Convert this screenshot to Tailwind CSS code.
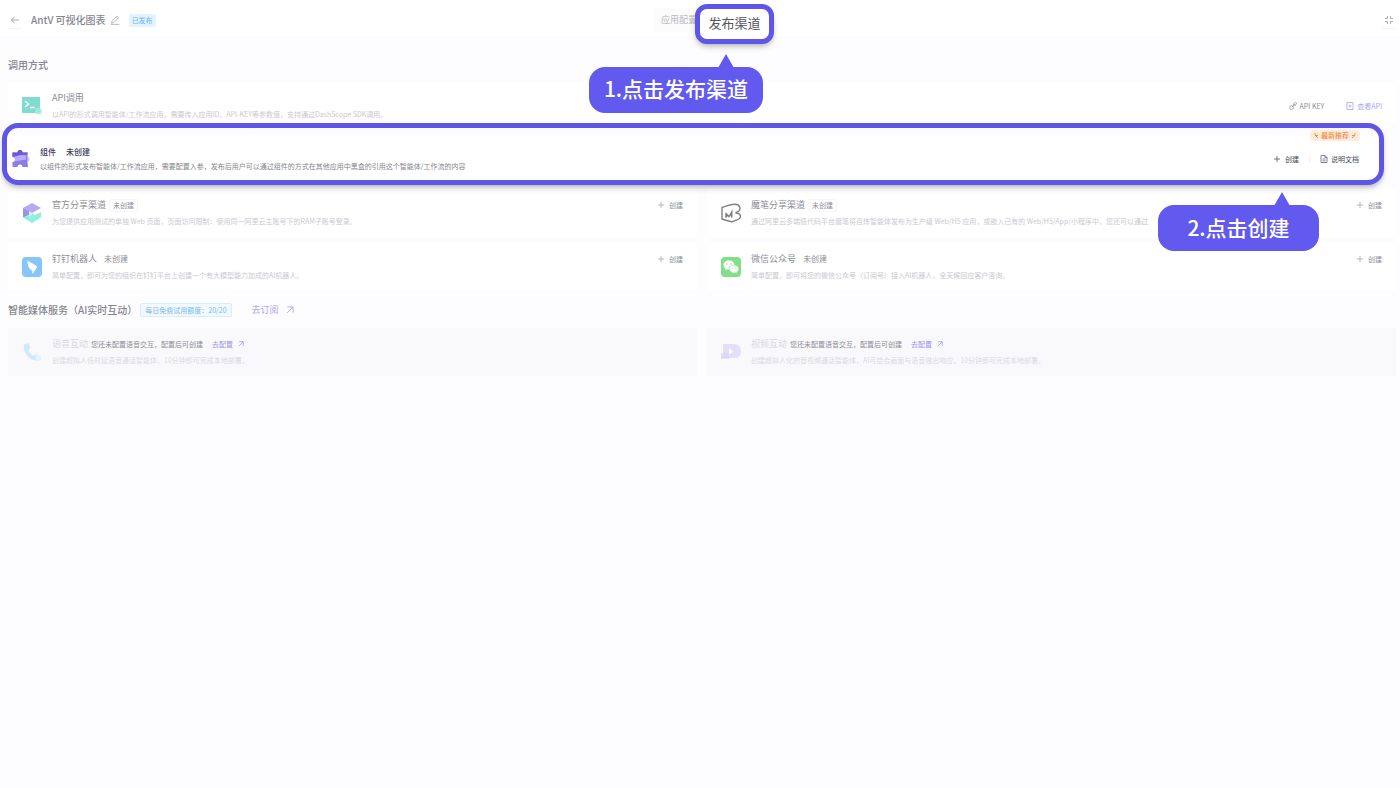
<!DOCTYPE html>
<html lang="zh-CN">
<head>
    <meta charset="UTF-8">
    <meta name="viewport" content="width=device-width, initial-scale=1.0">
    <title>AntV 可视化图表 - 发布渠道</title>
    <script src="https://cdn.jsdelivr.net/npm/@tailwindcss/browser@4"></script>
</head>
<body class="min-h-screen bg-[#fdfdff] font-['Noto_Sans_CJK_SC',sans-serif] text-[7px] text-[#8d8d98]">

    <header class="grid h-9 grid-cols-[1fr_auto_1fr] items-center bg-white pt-1 pr-1 pl-2">
        <div class="flex items-center">
            <button type="button" aria-label="返回" class="flex h-[18px] w-[14px] items-center justify-center border-b border-[#f3f3f6]">
                <svg class="size-[10px]" viewBox="0 0 10 10" fill="none" stroke="#a9a9b0" stroke-width="1"><path d="M9 5H1.5M4.5 2 1.3 5l3.2 3"/></svg>
            </button>
            <h1 class="ml-[9px] text-[10px] leading-4 font-medium text-[#85858f]">AntV 可视化图表</h1>
            <button type="button" aria-label="编辑" class="ml-1">
                <svg class="size-[10px]" viewBox="0 0 10 10" fill="none" stroke="#aaaab2" stroke-width=".8"><path d="M1.5 8.2 2 6.1 7 1.1l1.6 1.6-5 5zM6 2.2l1.6 1.6M1 9.4h8.3"/></svg>
            </button>
            <span class="ml-[9px] rounded-xs bg-[#e3f3ff] px-[3px] text-[7px] leading-[13px] text-[#6ab5f5]">已发布</span>
        </div>

        <nav class="relative flex h-6 w-[98px] items-center bg-[#fcfcfd] pl-2">
            <button type="button" class="text-[9px] text-[#b8b8c0]">应用配置</button>
            <div class="absolute top-[-5px] left-[42px] z-20">
                <button type="button" class="mt-[1px] h-10 w-[79px] rounded-xl border-5 border-[#5f56e8] bg-white pb-[3px] text-[13px] text-[#555562] shadow-md shadow-black/20">发布渠道</button>
                <div class="absolute top-[64px] left-[-106px] flex h-[46px] w-[174px] items-center justify-center rounded-2xl bg-[#6259ef] pb-[2px] text-[21px] font-medium whitespace-nowrap text-white">
                    <svg class="absolute -top-[13px] left-[129px] h-[14px] w-4" viewBox="0 0 16 14" fill="#6259ef"><path d="M8 0l8 14H0z"/></svg>
                    1.点击发布渠道
                </div>
            </div>
        </nav>

        <button type="button" aria-label="退出全屏" class="flex h-[18px] w-[14px] items-center justify-center justify-self-end border-b border-[#f3f3f6]">
            <svg class="size-[10px]" viewBox="0 0 10 10" fill="none" stroke="#a9a9b0" stroke-width="1"><path d="M3.5 1v2.5H1M6.5 1v2.5H9M3.5 9V6.500H1M6.500 9V6.500H9"/></svg>
        </button>
    </header>

    <main class="pr-1 pl-2">
        <h2 class="flex h-[47px] items-center pt-[9px] text-[10px] font-medium text-[#85858f]">调用方式</h2>

        <!-- API -->
        <section class="flex h-10 items-center gap-[10px] bg-white px-[14px] pt-[5px] leading-4">
            <svg class="size-5 shrink-0" viewBox="0 0 20 20"><path fill="#7fdccf" d="M0 1h18v16H0z"/><circle cx="16.500" cy="15" r="3.500" fill="#a5ecdf" opacity=".8"/><path d="M3 5l3.500 3L3 11M8 11.500h4.500" fill="none" stroke="#fff" stroke-width="1.500"/></svg>
            <div class="min-w-0 grow">
                <h3 class="text-[9px] text-[#8d8d98]">API调用</h3>
                <p class="truncate text-[#c9c9cf]">以API的形式调用智能体/工作流应用，需要传入应用ID、API-KEY等参数值，支持通过DashScope SDK调用。</p>
            </div>
            <div class="flex shrink-0 gap-[22px]">
                <a href="#" class="flex items-center gap-[3px]">
                    <svg class="size-2" viewBox="0 0 8 8" fill="none" stroke="#a0a0a8" stroke-width=".8"><circle cx="2.500" cy="5.500" r="2"/><circle cx="6.500" cy="1.500" r="1"/><path d="M2.500 5.500 5.800 2.200M4.500 3.500V1.800M5 3.500h1.500"/></svg>
                    API KEY
                </a>
                <a href="#" class="flex items-center gap-[3px] text-[#aaa5f5]">
                    <svg class="size-2" viewBox="0 0 8 8" fill="none" stroke="#aaa5f5" stroke-width=".8"><path d="M1 .5h6v7H1zM4 2.500v3M2.500 4h3"/></svg>
                    查看API
                </a>
            </div>
        </section>

        <!-- 组件 -->
        <section class="relative z-10 -ml-[6px] mr-3 flex h-[62px] items-center gap-[10px] rounded-2xl border-5 border-[#5f56e8] bg-linear-to-b from-[#fafaff] to-white to-20% pt-[9px] pr-5 pl-[5px] leading-[14px] shadow-md shadow-black/20">
            <svg class="size-[18px] shrink-0" viewBox="0 0 18 18"><circle cx="15.300" cy="9" r="2.500" fill="#d7d0fb"/><path fill="#8e7bea" d="M.5 2.500h5a2.500 2.500 0 0 1 5 0h5V13l.5 4h-5.500a2.500 2.500 0 0 0-5 0H.5v-5a2.500 2.500 0 0 0 0-5z"/><path fill="#6f56d6" d="M.5 2.500h5a2.500 2.500 0 0 1 5 0h5v2C10 4 5 5.500.5 7z"/><path fill="#b9abf6" d="M2 7c4-1.500 8-2 12-1.500v4C10 10 6 11 2.500 11.500 3.300 10 3.200 8 2 7z"/></svg>
            <div class="min-w-0 grow">
                <h3 class="flex gap-[10px] text-[8px] font-medium text-[#3d3b5c]">组件 <span>未创建</span></h3>
                <p class="truncate text-[#85858d]">以组件的形式发布智能体/工作流应用，需要配置入参，发布后用户可以通过组件的方式在其他应用中黑盒的引用这个智能体/工作流的内容</p>
            </div>
            <span class="absolute top-[2px] right-[19px] flex items-center gap-[2px] rounded-sm bg-[#ffecdc] px-1 text-[7px] leading-[11px] font-medium text-[#f78a45]">
                <svg class="size-[5px]" viewBox="0 0 5 5" fill="none" stroke="#f78a45" stroke-width="1"><path d="M1 0v2l3 3M2 2.500h2"/></svg>
                最新推荐
                <svg class="size-[5px]" viewBox="0 0 5 5" fill="none" stroke="#f78a45" stroke-width="1"><path d="M4 0v2L1 5M3 2.500H1"/></svg>
            </span>
            <div class="flex shrink-0 items-center text-[#45455a]">
                <button type="button" class="flex items-center gap-[5px]">
                    <svg class="size-[6px]" viewBox="0 0 6 6" stroke="#66667a" stroke-width=".9"><path d="M3 0v6M0 3h6"/></svg>
                    创建
                </button>
                <i class="mx-[10px] h-2 w-px bg-[#f0f0f4]"></i>
                <a href="#" class="flex items-center gap-[3px]">
                    <svg class="size-2" viewBox="0 0 8 8" fill="none" stroke="#66667a" stroke-width=".8"><path d="M1 .5h4l2 2v5H1zM5 .5v2h2M2.500 4h3M2.500 5.800h3"/></svg>
                    说明文档
                </a>
            </div>
            <div class="absolute top-[77px] right-[60px] flex h-[46px] w-[161px] items-center justify-center rounded-2xl bg-[#6259ef] pb-[2px] text-[21px] font-medium whitespace-nowrap text-white">
                <svg class="absolute -top-[13px] left-[116px] h-[14px] w-4" viewBox="0 0 16 14" fill="#6259ef"><path d="M8 0l8 14H0z"/></svg>
                2.点击创建
            </div>
        </section>

        <div class="mt-1 grid grid-cols-2 gap-x-[10px] gap-y-[6px] leading-4">
            <section class="flex h-12 min-w-0 gap-[10px] bg-white px-[14px] py-2">
                <svg class="mt-[6px] size-5 shrink-0" viewBox="0 0 20 20"><path fill="#baa8f1" d="M10 0l9 5-9 5-9-5z"/><path fill="#9c92e6" d="M1 5l6 3v8.500L1 14z"/><path fill="#8ff0e0" d="M1 14.500 10 10l3 2 6-3v5.500L10 20z"/><path fill="#c9f6f3" d="M7 8.500l3 1.500v2L7 14z"/></svg>
                <div class="min-w-0 grow">
                    <h3 class="flex items-center gap-[3px] text-[9px]">官方分享渠道 <span class="rounded-xs border border-[#f6f6f9] px-[3px] text-[7px] leading-[11px]">未创建</span></h3>
                    <p class="truncate text-[#c9c9cf]">为您提供应用测试的单独 Web 页面，页面访问限制：使用同一阿里云主账号下的RAM子账号登录。</p>
                </div>
                <button type="button" class="flex h-4 shrink-0 items-center gap-[5px]">
                    <svg class="size-[6px]" viewBox="0 0 6 6" stroke="#b0b0b8" stroke-width=".9"><path d="M3 0v6M0 3h6"/></svg>
                    创建
                </button>
            </section>

            <section class="flex h-12 min-w-0 gap-[10px] bg-white px-[14px] py-2">
                <svg class="mt-[6px] size-5 shrink-0" viewBox="0 0 20 20" fill="none" stroke="#808084" stroke-width="1.400"><path d="M1 4.500C5 3.500 9 1 14 1.200c5 .1 6.500 4.800 3.500 7.300l-3 1.500c3 0 5 1.500 5 4-1 3-5 3.500-9 4.800C6.500 18 3.500 17 1 16z"/><path fill="#808084" stroke="none" d="M4 14.500 4.500 9 8 12.500 11.500 6v8.500H10l-.5-2L8 14.800 6.300 13 6 14.500z"/></svg>
                <div class="min-w-0 grow">
                    <h3 class="flex items-center gap-[3px] text-[9px]">魔笔分享渠道 <span class="rounded-xs border border-[#f6f6f9] px-[3px] text-[7px] leading-[11px]">未创建</span></h3>
                    <p class="truncate text-[#c9c9cf]">通过阿里云多端低代码平台魔笔将百炼智能体发布为生产级 Web/H5 应用，或嵌入已有的 Web/H5/App/小程序中，您还可以通过</p>
                </div>
                <button type="button" class="flex h-4 shrink-0 items-center gap-[5px]">
                    <svg class="size-[6px]" viewBox="0 0 6 6" stroke="#b0b0b8" stroke-width=".9"><path d="M3 0v6M0 3h6"/></svg>
                    创建
                </button>
            </section>

            <section class="flex h-12 min-w-0 gap-[10px] bg-white px-[14px] py-2">
                <svg class="mt-[6px] size-5 shrink-0" viewBox="0 0 20 20"><rect width="20" height="20" rx="4" fill="#84c5fb"/><path fill="#fff" d="M5.500 3.500 14 8.500c1.200.8 1.200 1.600.6 2.600l-3.600 5.400-1-.5.500-2C8 12.500 6.500 10.500 6.300 9 5.800 7.500 5.300 5.500 5.500 3.500z"/></svg>
                <div class="min-w-0 grow">
                    <h3 class="flex items-center gap-[7px] text-[9px]">钉钉机器人 <span class="text-[8px]">未创建</span></h3>
                    <p class="truncate text-[#c9c9cf]">简单配置，即可为您的组织在钉钉平台上创建一个有大模型能力加成的AI机器人。</p>
                </div>
                <button type="button" class="flex h-4 shrink-0 items-center gap-[5px]">
                    <svg class="size-[6px]" viewBox="0 0 6 6" stroke="#b0b0b8" stroke-width=".9"><path d="M3 0v6M0 3h6"/></svg>
                    创建
                </button>
            </section>

            <section class="flex h-12 min-w-0 gap-[10px] bg-white px-[14px] py-2">
                <svg class="mt-[6px] size-5 shrink-0" viewBox="0 0 20 20"><rect width="20" height="20" rx="4" fill="#7fe087"/><path fill="#fff" d="M8 3.500c-3.200 0-5.500 2-5.500 4.500 0 1.500.8 2.700 2 3.500L4 13.200l2-1c.6.2 1.300.3 2 .3 3.200 0 5.500-2 5.500-4.500S11.200 3.500 8 3.500z"/><path fill="#fff" stroke="#7fe087" stroke-width=".6" d="M13 8c-2.700 0-4.800 1.800-4.800 4s2.100 4 4.800 4c.6 0 1.200-.1 1.700-.3l1.700.9-.4-1.500c1.100-.7 1.800-1.800 1.800-3.100 0-2.200-2.100-4-4.800-4z"/><g fill="#7fe087"><circle cx="6" cy="7" r=".7"/><circle cx="10" cy="7" r=".7"/><circle cx="11.500" cy="11" r=".6"/><circle cx="14.700" cy="11" r=".6"/></g></svg>
                <div class="min-w-0 grow">
                    <h3 class="flex items-center gap-[7px] text-[9px]">微信公众号 <span class="text-[8px]">未创建</span></h3>
                    <p class="truncate text-[#c9c9cf]">简单配置，即可将您的微信公众号（订阅号）接入AI机器人，全天候回应客户咨询。</p>
                </div>
                <button type="button" class="flex h-4 shrink-0 items-center gap-[5px]">
                    <svg class="size-[6px]" viewBox="0 0 6 6" stroke="#b0b0b8" stroke-width=".9"><path d="M3 0v6M0 3h6"/></svg>
                    创建
                </button>
            </section>
        </div>

        <div class="flex h-[37px] items-center">
            <h2 class="text-[10px] font-medium text-[#85858f]">智能媒体服务（AI实时互动）</h2>
            <span class="ml-[3px] rounded-xs border border-[#d5edfd] bg-[#f1f9ff] px-1 leading-3 text-[#78b9ee]">每日免费试用额度：20/20</span>
            <a href="#" class="ml-5 flex items-center gap-[7px] text-[9px] text-[#b0a4f2]">
                去订阅
                <svg class="size-2" viewBox="0 0 8 8" fill="none" stroke="#b0a4f2" stroke-width=".9"><path d="M1 7l6-6M1.500 1H7v5.500"/></svg>
            </a>
        </div>

        <div class="grid grid-cols-2 gap-x-[10px] leading-4">
            <section class="flex h-12 min-w-0 gap-[10px] bg-[#f9f9fb] px-[14px] py-2">
                <svg class="mt-[6px] size-5 shrink-0" viewBox="0 0 20 20"><path fill="#cfe9fb" d="M2 2.500 6.500 1l2.200 5-2.200 2c.8 2.400 2.500 4.500 5 5.800l2-2 5.500 2.700v3.800C10 21 0 12 2 2.500z"/><path fill="#dff6fb" d="M13 12l6 2.500V19h-5z"/></svg>
                <div class="min-w-0 grow">
                    <h3 class="flex items-center text-[9px] text-[#d8d8de]">
                        语音互动
                        <span class="ml-[3px] text-[7px] text-[#8d8d98]">您还未配置语音交互，配置后可创建</span>
                        <a href="#" class="ml-[9px] flex items-center gap-[5px] text-[7px] text-[#9d91f0]">
                            去配置
                            <svg class="size-[6px]" viewBox="0 0 8 8" fill="none" stroke="#9d91f0" stroke-width="1"><path d="M1 7l6-6M1.500 1H7v5.500"/></svg>
                        </a>
                    </h3>
                    <p class="truncate text-[#dadadf]">创建超拟人低时延语音通话智能体，10分钟即可完成本地部署。</p>
                </div>
            </section>

            <section class="flex h-12 min-w-0 gap-[10px] bg-[#f9f9fb] px-[14px] py-2">
                <svg class="mt-[6px] size-5 shrink-0" viewBox="0 0 20 20"><path fill="#e4def9" d="M2 2h11c4 0 7 3 7 7s-2 7-5 7H0l2-3z"/><path fill="#d9d1f5" d="M0 11h8v6H0z" opacity=".6"/><path fill="#fff" d="M8 6.500l4.500 3L8 12.500z"/></svg>
                <div class="min-w-0 grow">
                    <h3 class="flex items-center text-[9px] text-[#d8d8de]">
                        视频互动
                        <span class="ml-[3px] text-[7px] text-[#8d8d98]">您还未配置语音交互，配置后可创建</span>
                        <a href="#" class="ml-[9px] flex items-center gap-[5px] text-[7px] text-[#9d91f0]">
                            去配置
                            <svg class="size-[6px]" viewBox="0 0 8 8" fill="none" stroke="#9d91f0" stroke-width="1"><path d="M1 7l6-6M1.500 1H7v5.500"/></svg>
                        </a>
                    </h3>
                    <p class="truncate text-[#dadadf]">创建超拟人化的音视频通话智能体，AI可结合画面与语音做出响应，10分钟即可完成本地部署。</p>
                </div>
            </section>
        </div>
    </main>
</body>
</html>
